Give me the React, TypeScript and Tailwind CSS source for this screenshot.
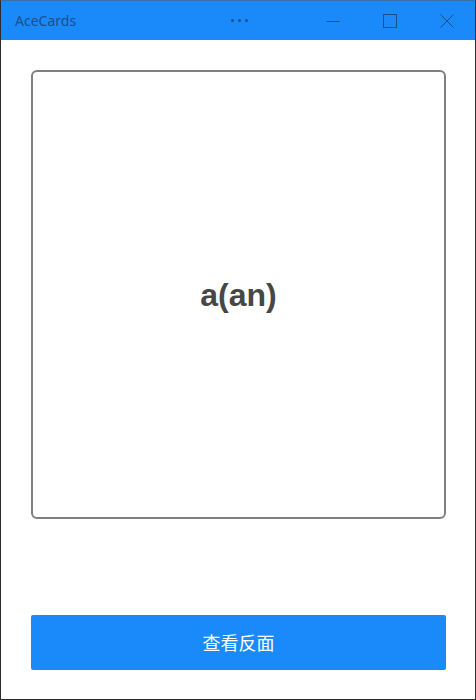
export default function App() {
  return (
    <div className="w-[476px] h-[700px] flex flex-col bg-white border-x border-b border-t border-x-[#2b2b2b] border-b-[#2b2b2b] border-t-[#3b6fa8]">
      {/* title bar */}
      <div className="h-[39px] shrink-0 flex items-stretch bg-[#1a8afa] text-[#1b4f8c]">
        <div className="pl-[14px] flex items-center text-[14px] font-['Segoe_UI','Noto_Sans',sans-serif]">AceCards</div>
        <div className="flex-1" />
        <div className="w-[47px] flex items-center justify-center gap-[4px]">
          <span className="w-[3px] h-[3px] rounded-full bg-[#1b4f8c]" />
          <span className="w-[3px] h-[3px] rounded-full bg-[#1b4f8c]" />
          <span className="w-[3px] h-[3px] rounded-full bg-[#1b4f8c]" />
        </div>
        <div className="w-[42px]" />
        <div className="w-[56px] flex items-center justify-center">
          <svg width="14" height="14" viewBox="0 0 14 14" fill="none" stroke="currentColor" strokeWidth="1">
            <path d="M0.5 7.5H13.5" />
          </svg>
        </div>
        <div className="w-[57px] flex items-center justify-center">
          <svg width="14" height="14" viewBox="0 0 14 14" fill="none" stroke="currentColor" strokeWidth="1">
            <rect x="0.5" y="0.5" width="13" height="13" />
          </svg>
        </div>
        <div className="w-[57px] flex items-center justify-center">
          <svg width="14" height="14" viewBox="0 0 14 14" fill="none" stroke="currentColor" strokeWidth="1">
            <path d="M0.5 0.5L13.5 13.5M13.5 0.5L0.5 13.5" />
          </svg>
        </div>
      </div>

      {/* body */}
      <div className="flex-1 flex flex-col pl-[30px] pr-[29px] pt-[30px] pb-[29px]">
        <div className="h-[449px] border-2 border-[#808080] rounded-[6px] flex items-center justify-center">
          <span className="text-[32px] font-bold text-[#474747] font-['Liberation_Sans',Arial,sans-serif]">a(an)</span>
        </div>
        <div className="flex-1" />
        <button className="h-[55px] w-full rounded-[2px] bg-[#1a8afa] text-white text-[18px] font-['Noto_Sans_CJK_SC',sans-serif]">
          查看反面
        </button>
      </div>
    </div>
  )
}
